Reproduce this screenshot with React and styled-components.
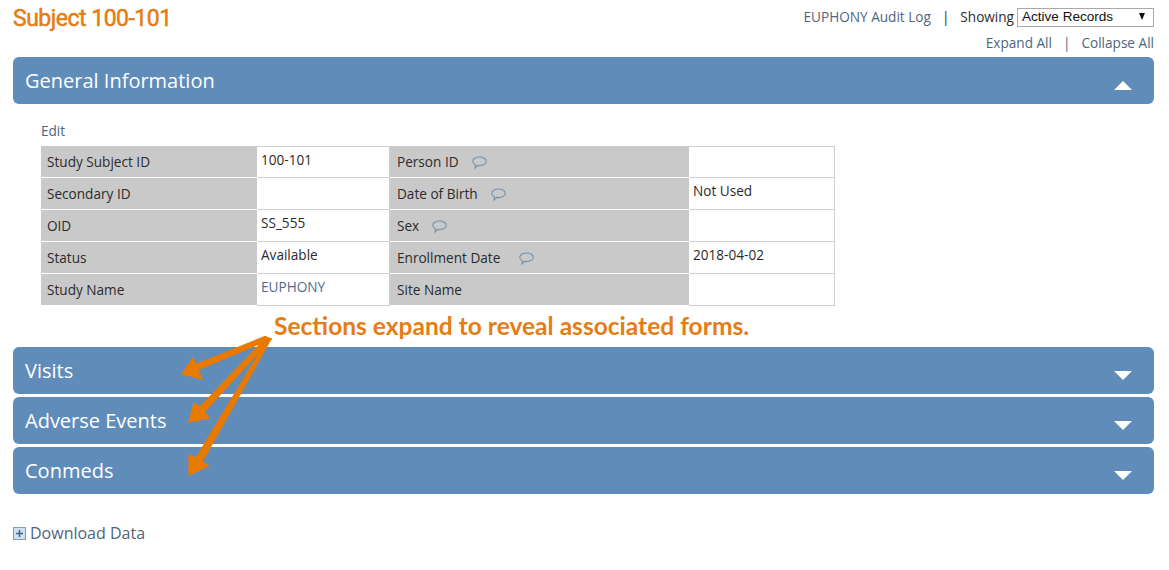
import React from "react";
import styled, { createGlobalStyle } from "styled-components";

const GlobalStyle = createGlobalStyle`
  html, body {
    margin: 0;
    padding: 0;
    background: #fff;
    font-family: "Open Sans", sans-serif;
    font-size: 13.6px;
    color: #2b2b2b;
  }
`;

const Page = styled.div`
  position: relative;
  width: 1169px;
  height: 570px;
  box-sizing: border-box;
  padding: 0 15px 0 13px;
  overflow: hidden;
`;

const Header = styled.div`
  display: flex;
  justify-content: space-between;
  height: 57px;
`;

const Title = styled.h1`
  margin: 5px 0 0;
  font-family: Roboto, sans-serif;
  font-size: 23px;
  line-height: 28px;
  font-weight: 400;
  letter-spacing: -0.5px;
  color: #e57c14;
  -webkit-text-stroke: 0.5px #e57c14;
`;

const Tools = styled.div`
  display: flex;
  flex-direction: column;
  align-items: flex-end;
`;

const ToolRow = styled.div`
  display: flex;
  align-items: center;
  height: ${(p) => p.$height}px;
  margin-top: ${(p) => p.$top || 0}px;
`;

const ToolLink = styled.a`
  color: #4f6580;
  text-decoration: none;
`;

const Pipe = styled.span`
  margin: 0 11px;
  color: ${(p) => p.$color};
  opacity: 0.99;
`;

const Select = styled.div`
  display: flex;
  justify-content: space-between;
  align-items: center;
  box-sizing: border-box;
  width: 137px;
  height: 19px;
  margin: 2px 0 0 3px;
  padding: 0 4px 2px;
  border: 1px solid #a9a9a9;
  font-family: "Liberation Sans", sans-serif;
  font-size: 13.55px;
  color: #111;
`;

const SelectArrow = styled.span`
  width: 0;
  height: 0;
  border-left: 3.5px solid transparent;
  border-right: 3.5px solid transparent;
  border-top: 7px solid #111;
  margin-right: 4px;
`;

const Bar = styled.div`
  display: flex;
  align-items: center;
  justify-content: space-between;
  box-sizing: border-box;
  height: 47px;
  padding: 0 22px 0 12px;
  margin-bottom: 3px;
  border-radius: 6px;
  background: #608cba;
  color: #fff;
  font-size: 20px;
`;

const Caret = styled.span`
  width: 0;
  height: 0;
  margin-top: 10px;
  border-left: 9.5px solid transparent;
  border-right: 9.5px solid transparent;
  ${(p) =>
    p.$up
      ? "border-bottom: 9px solid #fff;"
      : "border-top: 9px solid #fff;"}
`;

const InfoPanel = styled.div`
  box-sizing: border-box;
  height: 243px;
  margin-top: -3px;
  padding: 18px 0 0 28px;
`;

const EditLink = styled.a`
  display: block;
  height: 24px;
  line-height: 18px;
  color: #4f6580;
`;

const Table = styled.div`
  display: grid;
  grid-template-columns: 216px 133px 299px 146px;
  grid-auto-rows: 32px;
  width: 794px;
`;

const Label = styled.div`
  display: flex;
  align-items: center;
  box-sizing: border-box;
  padding: 0 0 0 ${(p) => p.$pad}px;
  background: #c9c9c9;
  border-bottom: 1px solid #fff;
  color: #2b2b2b;
`;

const Value = styled.div`
  box-sizing: border-box;
  padding: 3px 0 0 4px;
  border: 1px solid #cfcfcf;
  border-width: 1px 1px 1px 0;
  margin-top: ${(p) => (p.$first ? 0 : -1)}px;
  height: ${(p) => (p.$first ? 32 : 33)}px;
  color: ${(p) => p.$color || "#2b2b2b"};
`;

const Bubble = styled.svg`
  width: 15px;
  height: 13px;
  margin: 2px 0 0 ${(p) => p.$gap}px;
`;

const Note = styled.div`
  position: absolute;
  left: 274px;
  top: 311px;
  font-family: Lato, sans-serif;
  font-size: 24.55px;
  line-height: 30px;
  font-weight: 700;
  color: #e57c14;
`;

const Arrows = styled.svg`
  position: absolute;
  left: 170px;
  top: 330px;
`;

const ArrowShape = styled.polygon`
  fill: #e87a00;
  stroke: #e87a00;
  stroke-width: 1.2;
  stroke-linejoin: miter;
`;

const Download = styled.a`
  display: flex;
  align-items: center;
  margin-top: 27px;
  height: 24px;
  font-size: 16px;
  color: #4f6580;
`;

const PlusIcon = styled.svg`
  width: 13px;
  height: 13px;
  margin-right: 4px;
`;

const CommentIcon = ({ gap }) => (
  <Bubble $gap={gap} viewBox="0 0 15 13" fill="none">
    <path
      d="M7.500 1c3.600 0 6.800 1.800 6.800 4.300s-3.200 4.300-6.800 4.300c-.7 0-1.300-.1-1.900-.2L3 12l.4-3.200C1.800 8 .7 6.700.7 5.300.7 2.800 3.900 1 7.500 1z"
      stroke="#7391ad"
      strokeWidth="1.100"
    />
  </Bubble>
);

const rows = [
  ["Study Subject ID", "100-101", "Person ID", 13, ""],
  ["Secondary ID", "", "Date of Birth", 13, "Not Used"],
  ["OID", "SS_555", "Sex", 13, ""],
  ["Status", "Available", "Enrollment Date", 19, "2018-04-02"],
  ["Study Name", "EUPHONY", "Site Name", 0, ""],
];

export default function App() {
  return (
    <Page>
      <GlobalStyle />
      <Header>
        <Title>Subject 100-101</Title>
        <Tools>
          <ToolRow $height={19} $top={7}>
            <ToolLink>EUPHONY Audit Log</ToolLink>
            <Pipe $color="#2b2b2b">|</Pipe>
            <span>Showing</span>
            <Select>
              Active Records
              <SelectArrow />
            </Select>
          </ToolRow>
          <ToolRow $height={20} $top={6}>
            <ToolLink>Expand All</ToolLink>
            <Pipe $color="#4f6580">|</Pipe>
            <ToolLink>Collapse All</ToolLink>
          </ToolRow>
        </Tools>
      </Header>

      <Bar>
        General Information
        <Caret $up />
      </Bar>
      <InfoPanel>
        <EditLink>Edit</EditLink>
        <Table>
          {rows.map((r, i) => (
            <React.Fragment key={r[0]}>
              <Label $pad={6}>{r[0]}</Label>
              <Value $first={i === 0} $color={r[1] === "EUPHONY" ? "#4f6a8f" : undefined}>{r[1]}</Value>
              <Label $pad={7}>
                {r[2]}
                {r[3] > 0 && <CommentIcon gap={r[3]} />}
              </Label>
              <Value $first={i === 0}>{r[4]}</Value>
            </React.Fragment>
          ))}
        </Table>
      </InfoPanel>

      <Bar>
        Visits
        <Caret />
      </Bar>
      <Bar>
        Adverse Events
        <Caret />
      </Bar>
      <Bar>
        Conmeds
        <Caret />
      </Bar>

      <Download>
        <PlusIcon viewBox="0 0 13 13">
          <rect x="0.500" y="0.500" width="12" height="12" fill="#cfe0ef" stroke="#7f9fbd" />
          <path d="M6.500 3v7M3 6.500h7" stroke="#3d6690" strokeWidth="1.600" />
        </PlusIcon>
        Download Data
      </Download>

      <Note>Sections expand to reveal associated forms.</Note>
      <Arrows width="110" height="150" viewBox="0 0 110 150">
        <ArrowShape points="101,9 95,6.500 25.500,34.500 23,28 12,44 32,49 27.500,40" />
        <ArrowShape points="101,9 96,8 30,77 24,73 19,92 39,88 34,82" />
        <ArrowShape points="101,9 97,10 26,128 19,125 19,145 38,136 32,132" />
      </Arrows>
    </Page>
  );
}
